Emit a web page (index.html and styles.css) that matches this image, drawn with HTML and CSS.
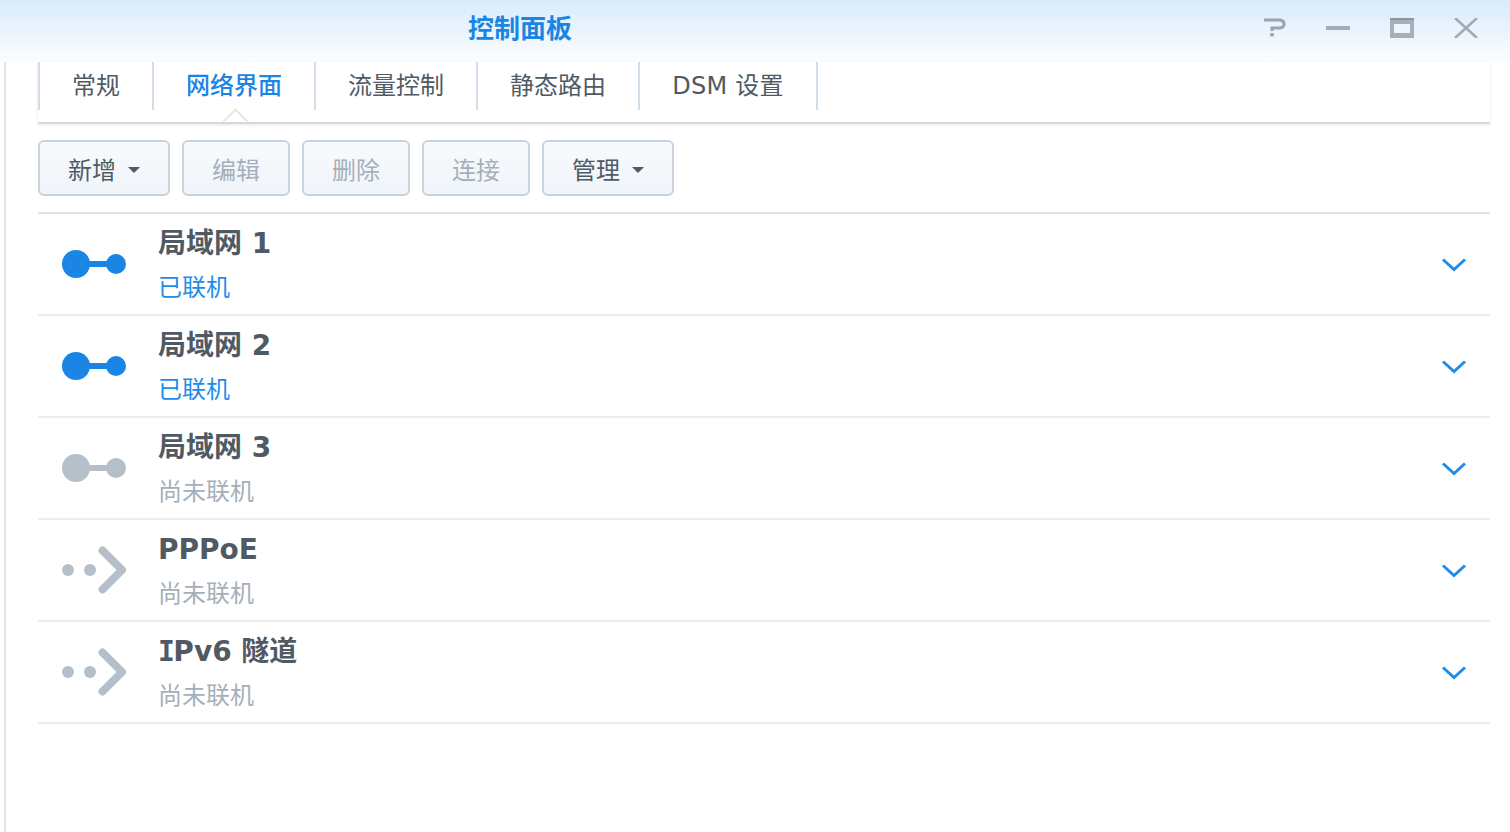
FILE: index.html
```html
<!DOCTYPE html>
<html lang="zh-CN">
<head>
<meta charset="utf-8">
<title>控制面板</title>
<link rel="stylesheet" href="styles.css">
</head>
<body>
<header class="titlebar">
  <h1 class="title">控制面板</h1>
  <div class="win-btns">
    <svg class="win-icon" width="24" height="20" viewBox="0 0 24 20"><path d="M2 2h15q5 0 5 4t-5 4h-7v3" fill="none" stroke="#98a4ae" stroke-width="3"/><rect x="8" y="15" width="4" height="3.500" fill="#a6b0b9"/></svg>
    <svg class="win-icon" width="24" height="20" viewBox="0 0 24 20"><rect x="0" y="8" width="24" height="4" fill="#a0abb5"/></svg>
    <svg class="win-icon" width="24" height="20" viewBox="0 0 24 20"><path d="M0 0h24v20H0z" fill="#a6b0b9"/><path d="M0 0h24v2H0z" fill="#8b96a0"/><path d="M4 6h16v9H4z" fill="#eef6fd"/></svg>
    <svg class="win-icon" width="24" height="20" viewBox="0 0 24 20"><path d="M1 0l22 20M23 0L1 20" stroke="#a0abb5" stroke-width="2.600" fill="none"/></svg>
  </div>
</header>
<main class="window">
  <nav class="tabs">
    <a class="tab tab-1">常规</a>
    <a class="tab tab-2 active">网络界面</a>
    <a class="tab tab-3">流量控制</a>
    <a class="tab tab-4">静态路由</a>
    <a class="tab tab-5">DSM 设置</a>
  </nav>
  <div class="toolbar">
    <button class="btn btn-menu">新增<i class="caret"></i></button>
    <button class="btn btn-off">编辑</button>
    <button class="btn btn-off">删除</button>
    <button class="btn btn-off">连接</button>
    <button class="btn btn-menu">管理<i class="caret"></i></button>
  </div>
  <ul class="list">
    <li class="row">
      <svg class="net" width="64" height="48" viewBox="0 0 64 48"><circle cx="14" cy="24" r="14" fill="#1a85e4"/><circle cx="54" cy="24" r="10" fill="#1a85e4"/><rect x="20" y="21" width="28" height="6" fill="#1a85e4"/></svg>
      <div class="info"><div class="name">局域网 1</div><div class="status on">已联机</div></div>
      <svg class="chev" width="24" height="14" viewBox="0 0 24 14"><path d="M1 1.500l11 10 11-10" fill="none" stroke="#1e8ceb" stroke-width="3"/></svg>
    </li>
    <li class="row">
      <svg class="net" width="64" height="48" viewBox="0 0 64 48"><circle cx="14" cy="24" r="14" fill="#1a85e4"/><circle cx="54" cy="24" r="10" fill="#1a85e4"/><rect x="20" y="21" width="28" height="6" fill="#1a85e4"/></svg>
      <div class="info"><div class="name">局域网 2</div><div class="status on">已联机</div></div>
      <svg class="chev" width="24" height="14" viewBox="0 0 24 14"><path d="M1 1.500l11 10 11-10" fill="none" stroke="#1e8ceb" stroke-width="3"/></svg>
    </li>
    <li class="row">
      <svg class="net" width="64" height="48" viewBox="0 0 64 48"><circle cx="14" cy="24" r="14" fill="#b4bfc9"/><circle cx="54" cy="24" r="10" fill="#b4bfc9"/><rect x="20" y="21" width="28" height="6" fill="#b4bfc9"/></svg>
      <div class="info"><div class="name">局域网 3</div><div class="status">尚未联机</div></div>
      <svg class="chev" width="24" height="14" viewBox="0 0 24 14"><path d="M1 1.500l11 10 11-10" fill="none" stroke="#1e8ceb" stroke-width="3"/></svg>
    </li>
    <li class="row">
      <svg class="net" width="64" height="48" viewBox="0 0 64 48"><circle cx="6" cy="24" r="6" fill="#b4bfc9"/><circle cx="28" cy="24" r="6" fill="#b4bfc9"/><path d="M40.500 4.500L60 24 40.500 43.500" fill="none" stroke="#b4bfc9" stroke-width="8" stroke-linecap="round" stroke-linejoin="round"/></svg>
      <div class="info"><div class="name">PPPoE</div><div class="status">尚未联机</div></div>
      <svg class="chev" width="24" height="14" viewBox="0 0 24 14"><path d="M1 1.500l11 10 11-10" fill="none" stroke="#1e8ceb" stroke-width="3"/></svg>
    </li>
    <li class="row">
      <svg class="net" width="64" height="48" viewBox="0 0 64 48"><circle cx="6" cy="24" r="6" fill="#b4bfc9"/><circle cx="28" cy="24" r="6" fill="#b4bfc9"/><path d="M40.500 4.500L60 24 40.500 43.500" fill="none" stroke="#b4bfc9" stroke-width="8" stroke-linecap="round" stroke-linejoin="round"/></svg>
      <div class="info"><div class="name"><span class="serif-i">I</span>Pv6 隧道</div><div class="status">尚未联机</div></div>
      <svg class="chev" width="24" height="14" viewBox="0 0 24 14"><path d="M1 1.500l11 10 11-10" fill="none" stroke="#1e8ceb" stroke-width="3"/></svg>
    </li>
  </ul>
</main>
</body>
</html>
```
FILE: styles.css
```css
* { box-sizing: border-box; }
html, body { margin: 0; height: 100%; overflow: hidden; background: #fff; }
body {
  height: 832px;
  display: flex;
  flex-direction: column;
  font-family: "DejaVu Sans", "Noto Sans CJK SC", sans-serif;
  color: #505a64;
}
.titlebar {
  flex: none;
  height: 62px;
  display: flex;
  align-items: center;
  justify-content: space-between;
  background: linear-gradient(#d9ebfb, #fbfdff);
  padding: 0 32px 4px 468px;
}
.title {
  margin: 0;
  font-size: 26px;
  line-height: 32px;
  font-weight: 700;
  color: #1a85e4;
}
.win-btns { display: flex; gap: 40px; padding-bottom: 2px; }
.win-icon { display: block; }
.window {
  flex: 1;
  margin-left: 4px;
  border-left: 2px solid #e3e5e7;
  padding: 0 20px 0 32px;
}
.tabs {
  height: 62px;
  display: flex;
  align-items: flex-start;
  border-bottom: 2px solid #d6d8db;
  box-shadow: 0 1px 3px rgba(0, 0, 0, .1);
  position: relative;
}
.tab {
  height: 48px;
  display: flex;
  align-items: center;
  justify-content: center;
  border-right: 2px solid #d2deea;
  font-size: 24px;
  line-height: 48px;
  white-space: nowrap;
}
.tab-1 { width: 116px; border-left: 2px solid #d2deea; }
.tab-2, .tab-3, .tab-4 { width: 162px; }
.tab-5 { width: 178px; letter-spacing: .2px; }
.active { color: #1a85e4; font-weight: 500; position: relative; }
.active::after {
  content: "";
  position: absolute;
  left: 71.500px;
  bottom: -20.500px;
  width: 17px;
  height: 17px;
  background: #fff;
  border-left: 2px solid #e2e4e6;
  border-top: 2px solid #e2e4e6;
  transform: rotate(45deg);
  clip-path: polygon(0 0, 100% 0, 0 100%);
}
.toolbar {
  display: flex;
  gap: 12px;
  padding-top: 16px;
}
.btn {
  height: 56px;
  width: 108px;
  padding: 0;
  border: 2px solid #c8d3de;
  border-radius: 6px;
  background: linear-gradient(#f7fafd, #f0f5fa);
  font: inherit;
  font-size: 24px;
  color: #505a64;
  display: flex;
  align-items: center;
  justify-content: center;
}
.btn-menu { width: 132px; }
.btn-off { color: #a5afb9; }
.caret {
  width: 0;
  height: 0;
  margin-left: 12px;
  margin-top: 4px;
  border-left: 6px solid transparent;
  border-right: 6px solid transparent;
  border-top: 6px solid #505a64;
}
.list {
  list-style: none;
  margin: 16px 0 0;
  padding: 0;
  border-top: 2px solid #d9e3ec;
}
.row {
  height: 102px;
  display: flex;
  align-items: center;
  padding: 0 24px;
  border-bottom: 2px solid #eaeef2;
}
.net { flex: none; display: block; }
.info { flex: 1; margin-left: 32px; }
.name {
  font-size: 28px;
  line-height: 36px;
  font-weight: 700;
  color: #505a64;
  height: 46px;
  margin-top: 2px;
}
.serif-i { font-family: "DejaVu Sans Mono", monospace; margin-right: -1.500px; }
.status {
  font-size: 24px;
  line-height: 32px;
  color: #a5afb9;
}
.on { color: #1e8ceb; }
.chev { flex: none; display: block; margin-top: 2px; }
```
